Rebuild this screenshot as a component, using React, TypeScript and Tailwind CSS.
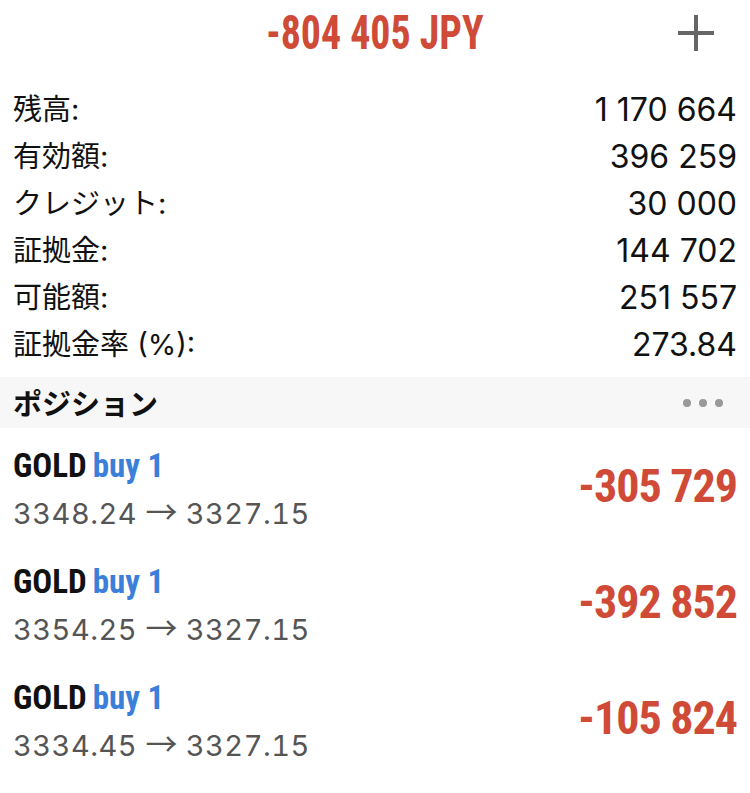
import React from "react";

const rows: [string, string][] = [
  ["残高:", "1 170 664"],
  ["有効額:", "396 259"],
  ["クレジット:", "30 000"],
  ["証拠金:", "144 702"],
  ["可能額:", "251 557"],
  ["証拠金率 (%):", "273.84"],
];

const positions = [
  { from: "3348.24", to: "3327.15", pl: "-305 729" },
  { from: "3354.25", to: "3327.15", pl: "-392 852" },
  { from: "3334.45", to: "3327.15", pl: "-105 824" },
];

export default function App() {
  return (
    <div className="w-[750px] h-[793px] bg-white overflow-hidden text-[#111]">
      <div className="h-[66px] grid grid-cols-[1fr_auto_1fr] items-center">
        <div />
        <div className="inline-block origin-center scale-x-[0.83] font-['Roboto_Condensed','Liberation_Sans_Narrow','DejaVu_Sans_Condensed',sans-serif] font-bold text-[48px] leading-none text-[#cf4a37]">
          -804 405 JPY
        </div>
        <div className="flex justify-end pr-[36px]">
          <svg width="36" height="36" viewBox="0 0 36 36">
            <rect x="16" y="0" width="4" height="36" fill="#666" />
            <rect x="0" y="16" width="36" height="4" fill="#666" />
          </svg>
        </div>
      </div>
      <div className="pt-[20px]">
        {rows.map(([l, v]) => (
          <div key={l} className="h-[47px] flex items-center justify-between px-[13px]">
            <span className="font-['Inter','Noto_Sans_CJK_JP',sans-serif] text-[29px]">{l}</span>
            <span className="font-['Inter',sans-serif] text-[32px]">{v}</span>
          </div>
        ))}
      </div>
      <div className="mt-[9px] h-[51px] bg-[#f7f7f7] flex items-center justify-between pl-[13px] pr-[27px]">
        <span className="font-['Noto_Sans_CJK_JP',sans-serif] font-bold text-[29px]">ポジション</span>
        <div className="flex gap-[8px]">
          <span className="w-[8px] h-[8px] rounded-full bg-[#999]" />
          <span className="w-[8px] h-[8px] rounded-full bg-[#999]" />
          <span className="w-[8px] h-[8px] rounded-full bg-[#999]" />
        </div>
      </div>
      {positions.map((p, i) => (
        <div key={i} className="h-[116px] flex items-center justify-between px-[13px]">
          <div className="flex flex-col pt-[2px]">
            <div className="h-[47px] flex items-center font-['Roboto_Condensed','Liberation_Sans_Narrow','DejaVu_Sans_Condensed',sans-serif] font-bold text-[33px]">
              <span className="text-[#111]">GOLD</span>
              <span className="text-[#3b7fdb] ml-[6px]">buy 1</span>
            </div>
            <div className="h-[43px] flex items-center text-[#555]">
              <span className="font-['Inter',sans-serif] text-[29px] tabular-nums tracking-[0.5px] whitespace-pre">
                {p.from}{" "}
                <span className="font-['Noto_Sans_CJK_JP',sans-serif] text-[32px] tracking-normal">→</span>
                {" "}{p.to}
              </span>
            </div>
          </div>
          <div className="font-['Roboto_Condensed','Liberation_Sans_Narrow','DejaVu_Sans_Condensed',sans-serif] font-bold text-[46px] tracking-[-1px] text-[#cf4a37]">
            {p.pl}
          </div>
        </div>
      ))}
    </div>
  );
}
